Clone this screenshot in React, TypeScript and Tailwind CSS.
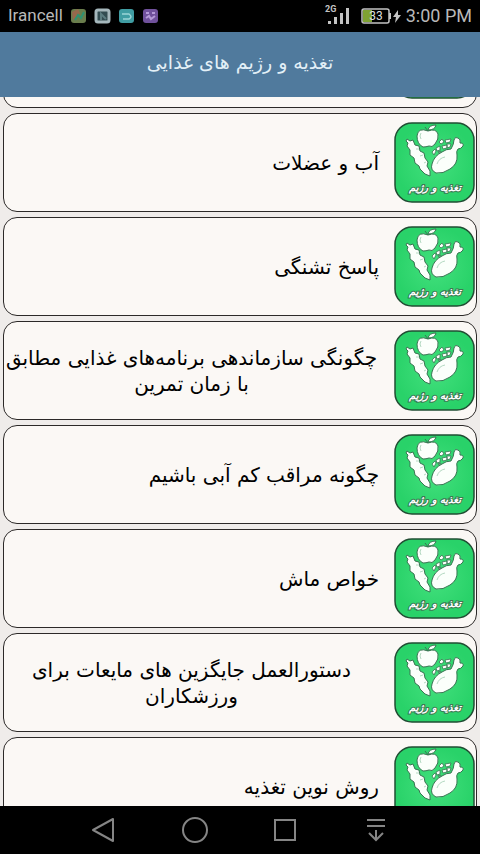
import { useLayoutEffect, useRef } from "react";

const ARTICLES = [
  { id: 1, lines: [] },
  { id: 2, lines: ["آب و عضلات"] },
  { id: 3, lines: ["پاسخ تشنگی"] },
  { id: 4, lines: ["چگونگی سازماندهی برنامه‌های غذایی مطابق", "با زمان تمرین"] },
  { id: 5, lines: ["چگونه مراقب کم آبی باشیم"] },
  { id: 6, lines: ["خواص ماش"] },
  { id: 7, lines: ["دستورالعمل جایگزین های مایعات برای", "ورزشکاران"] },
  { id: 8, lines: ["روش نوین تغذیه"] },
];

function StatusBar() {
  return (
    <div className="flex h-8 shrink-0 items-center justify-between bg-black px-2 font-['Roboto',sans-serif] text-[#b9b9b9]">
      <div className="flex items-center gap-2">
        <span className="text-[17px]">Irancell</span>
        <svg width="88" height="16" viewBox="0 0 88 16" fill="none">
          <rect x="0" y="1" width="15" height="14" rx="3" fill="#6a7d4c" />
          <path d="M1 4l6-3 2 4-7 7z" fill="#96694c" />
          <path d="M4 12l3-5 3 3 3-6" stroke="#2e9272" strokeWidth="2" />
          <rect x="25" y="2" width="13" height="12" rx="2" fill="#324c51" stroke="#a5b7bc" strokeWidth="3" />
          <path d="M30 12V6l5 5" stroke="#5b7c80" strokeWidth="2" />
          <rect x="48" y="1" width="15" height="14" rx="3" fill="#409da3" />
          <path d="M51 6h7q4 3 0 5h-6" stroke="#9ad5d7" strokeWidth="1.5" />
          <rect x="72" y="1" width="15" height="14" rx="3" fill="#70519c" />
          <path d="M75 5h3M81 5h3M75 10l3-2 2 3 4-3" stroke="#b59ad8" strokeWidth="2" />
        </svg>
      </div>
      <div className="flex items-center gap-1">
        <svg width="28" height="24" viewBox="0 0 28 24" fill="#c4c4c4">
          <text x="1" y="8" fontSize="9" fontWeight="700">2G</text>
          <rect x="4" y="17" width="3" height="3" />
          <rect x="10" y="13" width="3" height="7" />
          <rect x="16" y="9" width="3" height="11" />
          <rect x="22" y="4" width="3" height="16" />
        </svg>
        <svg width="42" height="16" viewBox="0 0 42 16" className="ml-1">
          <rect x="2" y="1" width="27" height="14" rx="2" stroke="#c4c4c4" strokeWidth="1.5" fill="none" />
          <rect x="3" y="2" width="9" height="12" fill="#7fa233" />
          <rect x="29" y="5" width="2" height="6" fill="#c4c4c4" />
          <text x="16" y="12" fontSize="12" textAnchor="middle" fill="#dedede">33</text>
          <path d="M38 2l-5 7h3l-1 6 6-8h-3z" fill="#c4c4c4" />
        </svg>
        <span className="text-lg">3:00 PM</span>
      </div>
    </div>
  );
}

function FoodIcon() {
  return (
    <svg viewBox="0 0 81 81" className="size-[81px] shrink-0">
      <defs>
        <radialGradient id="tile">
          <stop offset="0" stopColor="#43e07d" />
          <stop offset="1" stopColor="#29d269" />
        </radialGradient>
      </defs>
      <rect x="1" y="1" width="79" height="79" rx="17" fill="url(#tile)" stroke="#214d33" strokeWidth="1.5" />
      <g fill="#fbfffb" stroke="#397452" strokeWidth="1" strokeLinejoin="round">
        <path d="M13 17l3 2 3-1 2 5 4 1 1 5 4 2 1 5 3 4-1 4 3 5 0 5-5-2-5-5-1-3-4-3-1-5-4-3 0-5-3-4 1-3-2-2z" />
        <path d="M34 9q-10-4-11 5 0 8 6 11 3 0 6-1 3 2 6-2 4-5 3-10-2-6-10-3z" />
        <path d="M34 8q1-5 8-5-1 5-8 5z" />
        <path d="M34 9l-3-4" fill="none" />
        <path d="M57 27q3-5 3-9 1-4 4-2 3 1 2 5 4 0 3 3-2 3-5 3-2 2-1 6 1 9-7 14-7 5-14 4-6-3-4-9 2-8 10-12 4-3 9-3z" />
        <g strokeWidth="0.8">
          <path d="M38 30l3-3 1 2-2 4zM42 26l4-2 0 4-3 1zM45 20l3-3 2 3-3 2zM48 24l5-1 0 3-4 1zM51 18l6-1-1 3-4 1zM53 22l4 0-1 3-3 1zM44 30l3-1-1 2z" />
        </g>
      </g>
      <path d="M27 11q-2 3 0 6M43 42q2-6 8-7M22 27l3 0M26 34l3-1M30 41l2-1" stroke="#b4d9c2" fill="none" />
      <text
        x="41"
        y="69"
        textAnchor="middle"
        direction="rtl"
        fontSize="10"
        fontWeight="700"
        fontStyle="italic"
        fill="#fff"
        stroke="#3c7a53"
        strokeWidth="2"
        paintOrder="stroke"
        className="font-['DejaVu_Sans',sans-serif]"
      >
        تغذیه و رژیم
      </text>
    </svg>
  );
}

function ArticleCard({ lines }: { lines: string[] }) {
  return (
    <li>
      <a
        href="#"
        className="flex h-[99px] items-center gap-[15px] rounded-[14px] border border-[#2c2928] bg-[#fbf8f5] pr-px text-black"
      >
        <FoodIcon />
        <span className={lines.length > 1 ? "flex-1 text-center" : "flex-1"}>
          {lines.map((line) => (
            <span key={line} className="block">{line}</span>
          ))}
        </span>
      </a>
    </li>
  );
}

function NavBar() {
  const button = "flex h-12 w-[91px] items-center justify-center";
  return (
    <nav className="flex h-12 shrink-0 justify-center bg-black text-[#858585]">
      <button aria-label="Back" className={button}>
        <svg width="28" height="28" viewBox="0 0 28 28" fill="none" stroke="currentColor" strokeWidth="2" strokeLinejoin="round">
          <path d="M23 3v22L3 14z" />
        </svg>
      </button>
      <button aria-label="Home" className={button}>
        <svg width="28" height="28" viewBox="0 0 28 28" fill="none" stroke="currentColor" strokeWidth="2">
          <circle cx="14" cy="14" r="12" />
        </svg>
      </button>
      <button aria-label="Recent apps" className={button}>
        <svg width="28" height="28" viewBox="0 0 28 28" fill="none" stroke="currentColor" strokeWidth="2">
          <rect x="3" y="4" width="20" height="20" />
        </svg>
      </button>
      <button aria-label="Notifications" className={button}>
        <svg width="28" height="28" viewBox="0 0 28 28" fill="none" stroke="currentColor" strokeWidth="2">
          <path d="M4 4h18M4 10h18M13 14v9M6 17l7 7 7-7" />
        </svg>
      </button>
    </nav>
  );
}

export default function App() {
  const list = useRef<HTMLElement>(null);

  useLayoutEffect(() => {
    if (list.current) list.current.scrollTop = 88;
  }, []);

  return (
    <div className="flex h-screen flex-col bg-[#efecea] font-['DejaVu_Sans',sans-serif]">
      <StatusBar />
      <header className="flex h-[65px] shrink-0 items-center justify-center bg-[#507a9d] pb-1">
        <h1 dir="rtl" className="text-[19px] text-[#e3f0f7]">تغذیه و رژیم های غذایی</h1>
      </header>
      <main ref={list} dir="rtl" className="min-h-0 flex-1 overflow-y-auto text-xl leading-[26px] [scrollbar-width:none]">
        <ul className="flex flex-col gap-[5px] px-[3px] pb-[5px]">
          {ARTICLES.map((article) => (
            <ArticleCard key={article.id} lines={article.lines} />
          ))}
        </ul>
      </main>
      <NavBar />
    </div>
  );
}
